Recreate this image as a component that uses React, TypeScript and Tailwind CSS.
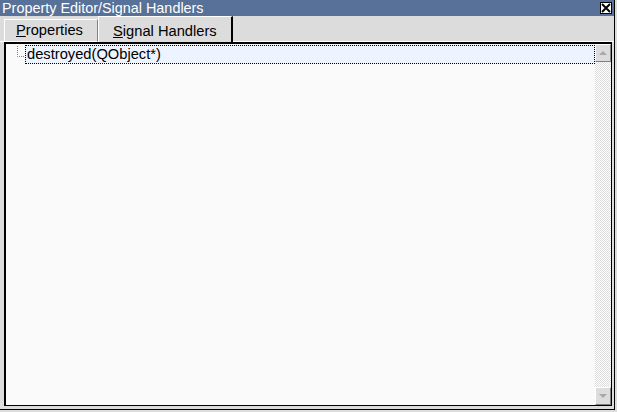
import React from "react";

export default function App() {
  return (
    <div className="w-[617px] h-[412px] bg-[#dcdcdc] overflow-hidden" style={{ fontFamily: '"Liberation Sans", Arial, sans-serif' }}>
      <div className="w-[615px] h-[410px] border-r border-b border-black flex flex-col">
        {/* Title bar */}
        <div className="h-[16px] bg-[#587198] flex items-center pl-[2px] pr-[2px]">
          <span className="text-white text-[14.4px] leading-[16px] whitespace-nowrap">Property Editor/Signal Handlers</span>
          <div className="ml-auto w-[12px] h-[12px] bg-white border border-black flex items-center justify-center">
            <svg width="10" height="10" viewBox="0 0 10 10">
              <path d="M1 1 L9 9 M9 1 L1 9" stroke="#000" strokeWidth="2" />
            </svg>
          </div>
        </div>
        {/* Tab row */}
        <div className="h-[26px] flex items-end">
          <div className="w-[4px] h-full border-b border-white" />
          <div className="w-[94px] h-[23px] border-t border-l border-r border-b border-t-white border-l-white border-r-[#808080] border-b-white flex items-center pl-[11px] text-[14.7px] leading-none text-black">
            <span><span className="underline">P</span>roperties</span>
          </div>
          <div className="w-[135px] h-[26px] border-t border-l border-r-2 border-t-white border-l-white border-r-black flex items-center pl-[14px] pt-[3px] text-[14.7px] leading-none text-black">
            <span><span className="underline">S</span>ignal Handlers</span>
          </div>
          <div className="flex-1 h-full border-b border-white" />
        </div>
        {/* Panel */}
        <div className="ml-[4px] mr-[2px] mb-[3px] flex-1 border-t-2 border-l-2 border-r border-b border-black bg-[#fafafa] flex">
          <div className="flex-1 flex flex-col">
            <div className="flex h-[19px] mt-[1px]">
              <div className="w-[19px] relative">
                <svg width="19" height="19" className="absolute left-0 top-0">
                  <path d="M11.5 1 V11.5 H19" stroke="#808080" strokeWidth="1" strokeDasharray="1 1" fill="none" />
                </svg>
              </div>
              <div className="flex-1 border border-dotted border-black bg-[#eef4ff] flex items-center pl-[1px] text-[14.7px] leading-none text-black">
                destroyed(QObject*)
              </div>
            </div>
          </div>
          {/* Scrollbar */}
          <div className="w-[16px] flex flex-col">
            <div className="h-[18px] bg-[#dcdcdc] border-t border-l border-r border-b border-t-white border-l-white border-r-[#808080] border-b-[#808080] flex items-center justify-center">
              <svg width="8" height="5" viewBox="0 0 8 5">
                <path d="M4 0 L8 4 L0 4 Z" fill="#a8a8a8" />
              </svg>
            </div>
            <div className="flex-1 bg-[repeating-conic-gradient(#dcdcdc_0%_25%,#ffffff_0%_50%)] bg-[length:2px_2px]" />
            <div className="h-[18px] bg-[#dcdcdc] border-t border-l border-r border-b border-t-white border-l-white border-r-[#808080] border-b-[#808080] flex items-center justify-center">
              <svg width="8" height="5" viewBox="0 0 8 5">
                <path d="M0 0 L8 0 L4 4 Z" fill="#a8a8a8" />
              </svg>
            </div>
          </div>
        </div>
      </div>
    </div>
  );
}
